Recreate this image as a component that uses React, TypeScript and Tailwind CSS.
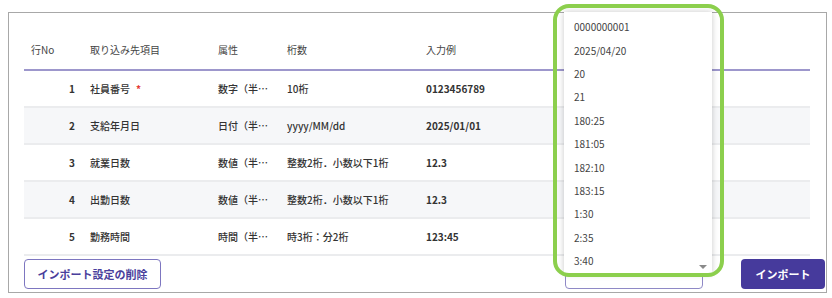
import React from "react";

const rows = [
  { no: 1, name: "社員番号", req: true, attr: "数字（半…", digits: "10桁", ex: "0123456789" },
  { no: 2, name: "支給年月日", req: false, attr: "日付（半…", digits: "yyyy/MM/dd", ex: "2025/01/01" },
  { no: 3, name: "就業日数", req: false, attr: "数値（半…", digits: "整数2桁．小数以下1桁", ex: "12.3" },
  { no: 4, name: "出勤日数", req: false, attr: "数値（半…", digits: "整数2桁．小数以下1桁", ex: "12.3" },
  { no: 5, name: "勤務時間", req: false, attr: "時間（半…", digits: "時3桁：分2桁", ex: "123:45" },
];

const options = [
  "0000000001",
  "2025/04/20",
  "20",
  "21",
  "180:25",
  "181:05",
  "182:10",
  "183:15",
  "1:30",
  "2:35",
  "3:40",
];

const grid = "grid grid-cols-[66px_128px_69px_139px_1fr] items-center";

export default function App() {
  return (
    <div
      className="relative w-[832px] h-[298px] bg-white overflow-hidden"
      style={{ fontFamily: '"Noto Sans CJK JP", "Noto Sans", sans-serif' }}
    >
      <div className="ml-[8px] mt-[12px] w-[819px] h-[281px] border border-[#a8a8a8] pl-[15px] pt-[16px]">
        <div className="w-[786px]">
          <div className={`${grid} h-[42px] border-b-2 border-[#9d97cc] text-[10px] text-[#444]`}>
            <div className="pl-[7px]">行No</div>
            <div>取り込み先項目</div>
            <div>属性</div>
            <div>桁数</div>
            <div>入力例</div>
          </div>
          {rows.map((r, i) => (
            <div
              key={r.no}
              className={`${grid} h-[37px] border-b-2 border-[#ebecee] text-[10px] font-medium text-[#333] ${
                i % 2 === 1 ? "bg-[#f6f7f9]" : "bg-white"
              }`}
            >
              <div className="text-right pr-[15px] font-bold">{r.no}</div>
              <div className="flex items-center gap-[6px]">
                <span>{r.name}</span>
                {r.req && <span className="text-[#e53935] font-bold">*</span>}
              </div>
              <div className="whitespace-nowrap">{r.attr}</div>
              <div className="whitespace-nowrap">{r.digits}</div>
              <div className="font-bold">{r.ex}</div>
            </div>
          ))}
        </div>
        <div className="mt-[3px] flex items-center justify-between pr-[1px]">
          <button className="h-[30px] w-[137px] rounded-[4px] border-[1.5px] border-[#7d76c0] bg-white text-[11px] font-bold text-[#4a3f9c]">
            インポート設定の削除
          </button>
          <div className="flex items-center gap-[38px]">
            <button className="h-[30px] w-[138px] rounded-[4px] border-[1.5px] border-[#8f89c6] bg-white" />
            <button className="h-[30px] w-[84px] rounded-[4px] bg-[#463a9c] text-[11px] font-bold text-white">
              インポート
            </button>
          </div>
        </div>
      </div>

      {/* dropdown */}
      <div className="absolute left-[564px] top-[12px] w-[148px] h-[262px] bg-white shadow-[0_0_6px_rgba(0,0,0,0.22)] pt-[3px] pl-[10px]">
        {options.map((o) => (
          <div key={o} className="h-[23.4px] flex items-center text-[10px] text-[#444]">
            {o}
          </div>
        ))}
        <div className="absolute right-[5px] bottom-[5px] w-0 h-0 border-l-[4px] border-r-[4px] border-t-[4px] border-l-transparent border-r-transparent border-t-[#8a8a8a]" />
      </div>
      {/* highlight */}
      <div className="absolute left-[553px] top-[4px] w-[171px] h-[273px] rounded-[16px] border-[4px] border-[#8ccf4d]" />
    </div>
  );
}
